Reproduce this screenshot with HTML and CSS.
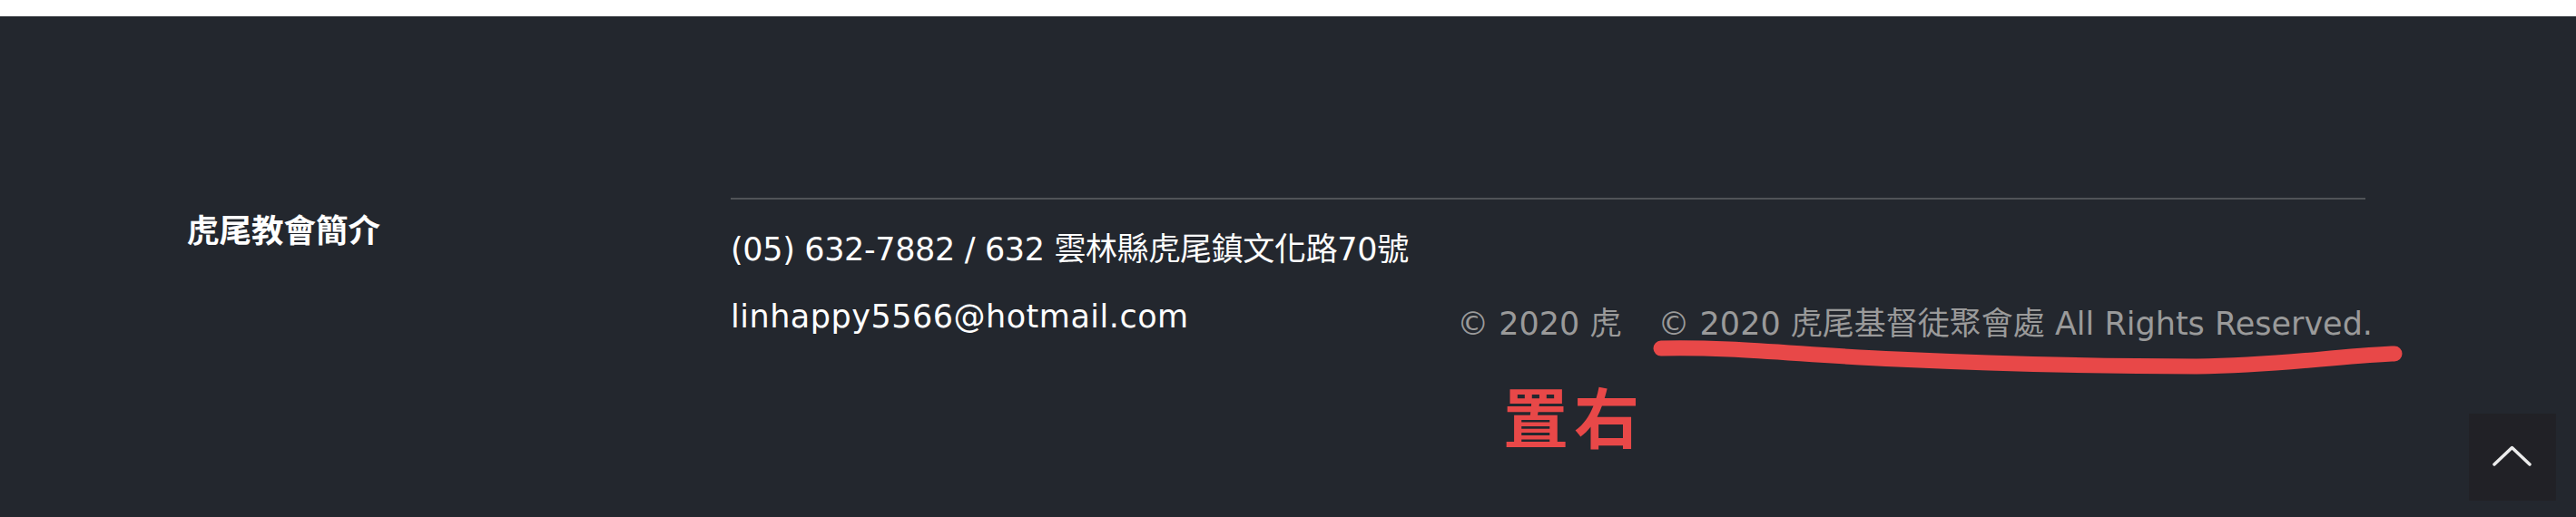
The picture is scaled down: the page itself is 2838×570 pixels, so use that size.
FILE: index.html
```html
<!DOCTYPE html>
<html lang="zh-Hant">
<head>
<meta charset="utf-8">
<title>虎尾基督徒聚會處</title>
<link rel="stylesheet" href="styles.css">
</head>
<body>
<div class="top-band"></div>
<footer class="site-footer">
  <div class="footer-inner">
    <div class="about">
      <h3 class="about-title">虎尾教會簡介</h3>
    </div>
    <div class="info">
      <div class="rule"></div>
      <p class="phone">(05) 632-7882 / 632 雲林縣虎尾鎮文化路70號</p>
      <div class="bottom-row">
        <p class="email">linhappy5566@hotmail.com</p>
        <p class="copy-short">© 2020 虎</p>
        <p class="copy">© 2020 虎尾基督徒聚會處 All Rights Reserved.</p>
      </div>
    </div>
  </div>
  <svg class="mark-stroke" width="860" height="60" viewBox="0 0 860 60">
    <path d="M10 14 C 90 12, 170 22, 270 26 C 380 31, 470 34, 600 34 C 690 33, 740 24, 815 20 L 818 20" fill="none" stroke="#e84848" stroke-width="17" stroke-linecap="round" stroke-linejoin="round"/>
  </svg>
  <div class="mark-note">置右</div>
  <a class="to-top" href="#">
    <svg width="96" height="96" viewBox="0 0 96 96">
      <polyline points="28,56 47.5,37.5 67,56" fill="none" stroke="#ececec" stroke-width="3.5" stroke-linecap="round" stroke-linejoin="round"/>
    </svg>
  </a>
</footer>
</body>
</html>
```
FILE: styles.css
```css
html, body {
  margin: 0;
  padding: 0;
}
body {
  background: #23272e;
  font-family: "DejaVu Sans", "Noto Sans CJK TC", sans-serif;
  height: 570px;
  overflow: hidden;
}
.top-band {
  height: 18px;
  background: #ffffff;
}
.site-footer {
  position: relative;
  height: 552px;
  background: #23272e;
  color: #ffffff;
}
.footer-inner {
  display: flex;
  padding: 200px 232px 0 206px;
}
.about {
  width: 599px;
  flex: none;
}
.about-title {
  margin: 8px 0 0;
  font-family: "Noto Sans CJK TC", sans-serif;
  font-size: 35.5px;
  font-weight: 600;
  line-height: 52px;
  color: #ffffff;
}
.info {
  flex: 1;
  min-width: 0;
}
.rule {
  height: 2px;
  background: #505357;
}
.phone {
  margin: 29px 0 0;
  font-size: 35px;
  letter-spacing: -0.35px;
  line-height: 52px;
  color: #ffffff;
  white-space: nowrap;
}
.bottom-row {
  display: flex;
  align-items: flex-start;
  margin: 22px -8px 0 0;
  white-space: nowrap;
}
.email {
  margin: 0;
  font-size: 35px;
  letter-spacing: 0.5px;
  line-height: 52px;
  color: #ffffff;
}
.copy-short,
.copy {
  margin: 8px 0 0;
  font-size: 35px;
  line-height: 52px;
  color: #9a9a9a;
}
.copy-short {
  margin-left: auto;
  margin-right: 40px;
}
.mark-stroke {
  position: absolute;
  left: 1820px;
  top: 352px;
}
.mark-note {
  position: absolute;
  left: 1656px;
  top: 403px;
  font-family: "Noto Sans CJK TC", sans-serif;
  font-size: 72px;
  font-weight: 700;
  line-height: 1;
  letter-spacing: 6px;
  color: #e84848;
}
.to-top {
  position: absolute;
  right: 22px;
  bottom: 18px;
  width: 96px;
  height: 96px;
  background: #212126;
  display: flex;
}
```
